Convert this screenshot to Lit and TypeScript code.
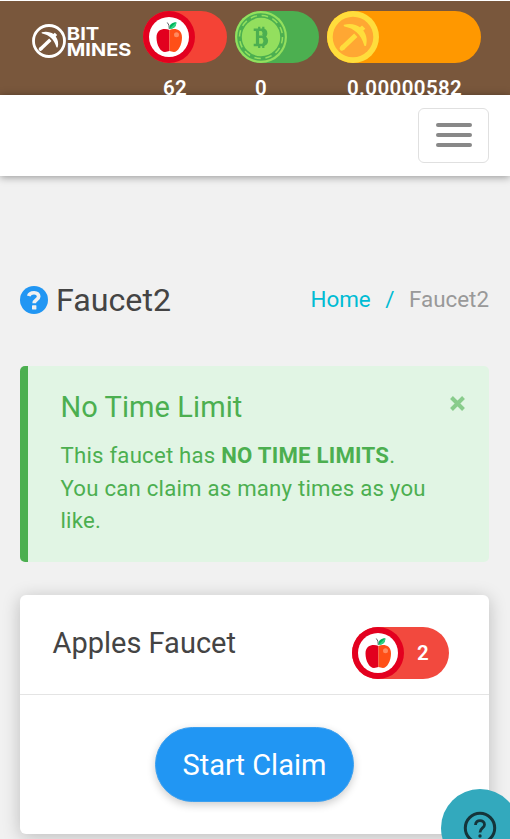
import { LitElement, html, css, svg } from 'lit';
import { customElement, property } from 'lit/decorators.js';

const pickaxe = svg`
  <path d="M17 13.800 C23 12 29.500 13.500 33 16.200 L35 14.500 L38.300 17.700 L36.300 19.600 C39.500 24 40.500 29.500 39 34.800 C38.200 35.400 37.500 35 37.200 34.200 C35.500 28.500 33 24.500 29.500 21.300 C26 18.200 22.500 16.500 17.500 15.500 C16.500 15 16.500 14.200 17 13.800 Z"/>
  <path d="M28.800 24.200 L15.300 37" fill="none" stroke="currentColor" stroke-width="4.800"/>
  <path d="M16 36.400 L15 37.300" fill="none" stroke="currentColor" stroke-width="4.800" stroke-linecap="round"/>
`;

@customElement('coin-icon')
export class CoinIcon extends LitElement {
  @property() kind = 'apple';

  static styles = css`
    :host {
      display: block;
      flex: none;
      width: 52px;
      height: 52px;
    }
    svg {
      display: block;
      width: 52px;
      height: 52px;
    }
    .gold {
      color: #ffdd3c;
    }
  `;

  apple() {
    return html`
      <svg viewBox="0 0 52 52">
        <circle cx="26" cy="26" r="26" fill="#e3001f" />
        <circle cx="26" cy="26" r="20" fill="#fff" />
        <path d="M26.500 19 C22 17 13.500 17.500 13.500 26.500 C13.500 34 17.500 41 22 41 C24 41 25 40 26.500 40 Z" fill="#e2001e" />
        <path d="M26.500 19 C31 17 39 17.500 39 26.500 C39 34 35 41 31 41 C29 41 28 40 26.500 40 Z" fill="#ff4f17" />
        <circle cx="33.500" cy="23.800" r="2.500" fill="#ff8a60" />
        <path d="M24.300 11.500 Q26.500 13.500 26.300 18" fill="none" stroke="#5c5f63" stroke-width="1" />
        <path d="M26.500 17.800 C26 13.500 29 11.200 33.300 11.200 C33.500 15 31 18 26.500 17.800 Z" fill="#00b35a" />
        <path d="M26.500 17.800 L33.300 11.200 C33.500 15 31 18 26.500 17.800 Z" fill="#32d583" />
      </svg>
    `;
  }

  cash() {
    return html`
      <svg viewBox="0 0 52 52">
        <circle cx="26" cy="26" r="26" fill="#93df5e" />
        <circle cx="26" cy="26" r="21.500" fill="none" stroke="#4caf50" stroke-width="4.600" />
        <circle cx="26" cy="26" r="21.500" fill="none" stroke="#93df5e" stroke-width="1.500" stroke-dasharray="6.500 4.757" />
        <g fill="none" stroke="#4caf50">
          <path d="M18.700 18.700 H27.500 C32.300 18.700 32.300 25.700 27.500 25.700 H22.500 M27.500 25.700 C33.300 25.700 33.300 34 27.500 34 H18.700" stroke-width="2.500" />
          <path d="M22.500 18 V34.500 M27.700 19 Q30.500 22 28.500 25 M28.500 26.500 Q31.700 30 28.500 33.500" stroke-width="3.200" />
          <path d="M24.200 15.700 V18 M28.300 15.700 V18 M24.200 34 V37 M28.300 34 V37" stroke-width="2.200" />
        </g>
      </svg>
    `;
  }

  gold() {
    return html`
      <svg class="gold" viewBox="0 0 52 52">
        <circle cx="26" cy="26" r="26" fill="#ffdd3c" />
        <circle cx="26" cy="26" r="20.300" fill="#ffa733" />
        <g fill="currentColor">${pickaxe}</g>
      </svg>
    `;
  }

  render() {
    if (this.kind === 'cash') return this.cash();
    if (this.kind === 'gold') return this.gold();
    return this.apple();
  }
}

@customElement('app-root')
export class AppRoot extends LitElement {
  @property({ attribute: false }) balances = [
    { kind: 'apple', value: '62' },
    { kind: 'cash', value: '0' },
    { kind: 'gold', value: '0.00000582' },
  ];

  static styles = css`
    * {
      box-sizing: border-box;
    }
    :host {
      display: block;
      position: relative;
      height: 839px;
      overflow: hidden;
      background: #f1f1f1;
      color: #444;
      font-family: Roboto, sans-serif;
      font-size: 22px;
    }
    h1, h2, h3, p {
      margin: 0;
      font-weight: 400;
    }

    /* Top bar */
    .topbar {
      display: flex;
      height: 94.500px;
      padding: 10px 0 0 32px;
      border-top: 1px solid #fff;
      background: #79573c;
      overflow: hidden;
    }
    .logo {
      width: 101px;
      height: 36px;
      margin: 12px 10px 0 0;
      color: #fff;
    }
    .logo text {
      font-family: Inter, sans-serif;
      font-weight: 700;
      font-size: 18px;
      fill: #fff;
    }
    .balances {
      display: flex;
      gap: 8px;
    }
    .pill {
      height: 52px;
      border-radius: 26px;
    }
    .apple {
      width: 84px;
      background: #f44336;
    }
    .cash {
      width: 84px;
      background: #4caf50;
    }
    .gold {
      width: 154px;
      background: #ff9800;
    }
    .value {
      padding: 10px 0 0 20px;
      color: #fff;
      font-size: 20.500px;
      font-weight: 600;
      line-height: 30px;
      letter-spacing: .4px;
    }

    /* Nav */
    .navbar {
      display: flex;
      justify-content: flex-end;
      height: 81px;
      padding: 13px 21px 0 0;
      background: #fff;
      box-shadow: 0 1px 8px rgba(0, 0, 0, .4);
    }
    .toggler {
      display: flex;
      flex-direction: column;
      align-items: center;
      justify-content: center;
      gap: 6px;
      width: 71px;
      height: 55px;
      padding: 0;
      border: 1.500px solid #e0e0e0;
      border-radius: 6px;
      background: #fff;
    }
    .bar {
      width: 36px;
      height: 3.700px;
      border-radius: 2px;
      background: #888;
    }

    /* Page */
    .page {
      padding: 100.500px 21px 0 20px;
    }
    .heading {
      display: flex;
      align-items: center;
      justify-content: space-between;
      height: 48px;
    }
    .title {
      display: flex;
      align-items: center;
      gap: 8px;
      font-size: 32.200px;
      line-height: 48px;
    }
    .title svg {
      width: 28px;
      height: 28px;
    }
    .crumbs {
      display: flex;
      gap: 14.500px;
      color: #999;
      font-size: 22.400px;
      line-height: 44px;
      padding-bottom: 3px;
    }
    .link {
      color: #00bcd4;
    }

    .alert {
      display: flex;
      justify-content: space-between;
      height: 196px;
      margin-top: 42px;
      padding: 23px 24px 0 32.500px;
      border-left: 8px solid #4caf50;
      border-radius: 5px;
      background: #e1f5e4;
      color: #4caf50;
    }
    .alert h2 {
      font-size: 29px;
      line-height: 36px;
      letter-spacing: .08px;
    }
    .alert p {
      width: 374px;
      margin-top: 14px;
      font-size: 22.200px;
      line-height: 32.500px;
      letter-spacing: .22px;
    }
    .close {
      width: 15px;
      height: 15px;
      margin-top: 7px;
    }

    .card {
      height: 239px;
      margin-top: 33px;
      border-radius: 6px;
      background: #fff;
      box-shadow: 0 3px 18px rgba(0, 0, 0, .22);
    }
    .card-head {
      display: flex;
      justify-content: space-between;
      height: 100px;
      padding: 32px 40px 0 32.500px;
      border-bottom: 1.500px solid #e4e4e4;
    }
    .card-head h3 {
      font-size: 29px;
      line-height: 32px;
    }
    .reward {
      display: flex;
      align-items: center;
      gap: 13px;
      width: 97px;
      height: 52px;
      border-radius: 26px;
      background: #f2493e;
      color: #fff;
      font-size: 20.500px;
      font-weight: 600;
    }
    .card-body {
      display: flex;
      justify-content: center;
      padding-top: 32px;
    }
    .claim {
      width: 199px;
      height: 75px;
      padding: 0;
      border: 1.500px solid #3ba0f0;
      border-radius: 38px;
      background: #2196f3;
      box-shadow: 0 3px 8px rgba(0, 0, 0, .2);
      color: #fff;
      font: 400 29px/72px Roboto, sans-serif;
    }

    /* Floating help button, sits over the card */
    .help {
      position: absolute;
      left: 441px;
      top: 789px;
      display: flex;
      align-items: center;
      justify-content: center;
      width: 78px;
      height: 78px;
      border-radius: 50%;
      background: #33a9bd;
    }
    .help svg {
      width: 34px;
      height: 34px;
    }
  `;

  render() {
    return html`
      <header class="topbar">
        <svg class="logo" viewBox="0 0 101 36">
          <circle cx="17" cy="18" r="15.500" fill="none" stroke="#fff" stroke-width="2.800" />
          <g fill="currentColor" transform="translate(-2.400 -.700) scale(.72)">${pickaxe}</g>
          <text x="34.800" y="17.200" textLength="32.500" lengthAdjust="spacingAndGlyphs">BIT</text>
          <text x="34.800" y="33" textLength="64.500" lengthAdjust="spacingAndGlyphs">MINES</text>
        </svg>
        <div class="balances">
          ${this.balances.map((b) => html`
            <div>
              <div class="pill ${b.kind}"><coin-icon kind=${b.kind}></coin-icon></div>
              <div class="value">${b.value}</div>
            </div>
          `)}
        </div>
      </header>
      <nav class="navbar">
        <button class="toggler" aria-label="Menu">
          <span class="bar"></span>
          <span class="bar"></span>
          <span class="bar"></span>
        </button>
      </nav>
      <main class="page">
        <div class="heading">
          <h1 class="title">
            <svg viewBox="0 0 28 28">
              <circle cx="14" cy="14" r="14" fill="#2196f3" />
              <path d="M8.700 10 C10 5.700 18.500 5.500 18.700 10.500 C18.700 14 14.200 13.500 14.200 17.300" fill="none" stroke="#f1f1f1" stroke-width="3.700" />
              <rect x="12" y="19.300" width="4.400" height="4.200" rx=".4" fill="#f1f1f1" />
            </svg>
            Faucet2
          </h1>
          <div class="crumbs">
            <span class="link">Home</span>
            <span class="link">/</span>
            <span>Faucet2</span>
          </div>
        </div>
        <section class="alert">
          <div>
            <h2>No Time Limit</h2>
            <p>This faucet has <b>NO TIME LIMITS</b>.<br />You can claim as many times as you like.</p>
          </div>
          <svg class="close" viewBox="0 0 15 15">
            <path d="M1.500 1.500 L13.500 13.500 M13.500 1.500 L1.500 13.500" stroke="#89cc8c" stroke-width="4" />
          </svg>
        </section>
        <section class="card">
          <div class="card-head">
            <h3>Apples Faucet</h3>
            <div class="reward"><coin-icon kind="apple"></coin-icon>2</div>
          </div>
          <div class="card-body">
            <button class="claim">Start Claim</button>
          </div>
        </section>
      </main>
      <div class="help">
        <svg viewBox="0 0 34 34" fill="none" stroke="#15343a">
          <circle cx="17" cy="17" r="14.700" stroke-width="3" />
          <path d="M12.500 14 C12.500 8 21.500 8.500 21.500 13.700 C21.500 17 17 17 17 21.500" stroke-width="2.800" />
          <circle cx="17" cy="25" r="1.700" fill="#15343a" stroke="none" />
        </svg>
      </div>
    `;
  }
}
